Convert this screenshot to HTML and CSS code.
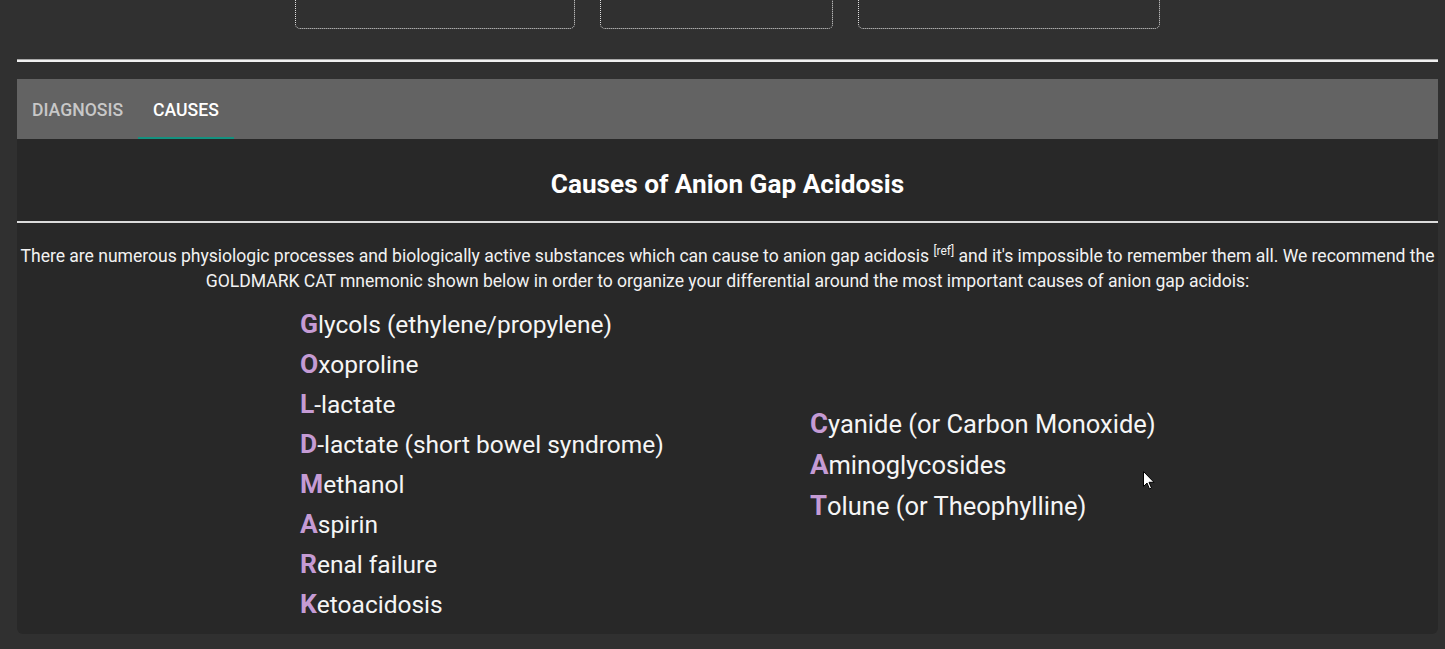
FILE: index.html
```html
<!DOCTYPE html>
<html>
<head>
<meta charset="utf-8">
<link rel="stylesheet" href="styles.css">
</head>
<body>
<div class="page">
  <div class="boxes">
    <div class="box b1"></div>
    <div class="box b2"></div>
    <div class="box b3"></div>
  </div>
  <hr class="sep">
  <div class="card">
    <div class="tabs">
      <div class="tab">Diagnosis</div>
      <div class="tab active">Causes</div>
    </div>
    <div class="panel">
      <h2 class="title">Causes of Anion Gap Acidosis</h2>
      <hr class="rule">
      <p class="intro">There are numerous physiologic processes and biologically active substances which can cause to anion gap acidosis <sup>[ref]</sup> and it's impossible to remember them all. We recommend the GOLDMARK CAT mnemonic shown below in order to organize your differential around the most important causes of anion gap acidois:</p>
      <div class="mnemonic">
        <ul class="col left">
          <li><b>G</b>lycols (ethylene/propylene)</li>
          <li><b>O</b>xoproline</li>
          <li><b>L</b>-lactate</li>
          <li><b>D</b>-lactate (short bowel syndrome)</li>
          <li><b>M</b>ethanol</li>
          <li><b>A</b>spirin</li>
          <li><b>R</b>enal failure</li>
          <li><b>K</b>etoacidosis</li>
        </ul>
        <ul class="col right">
          <li><b>C</b>yanide (or Carbon Monoxide)</li>
          <li><b>A</b>minoglycosides</li>
          <li><b>T</b>olune (or Theophylline)</li>
        </ul>
      </div>
    </div>
  </div>
  <svg class="cursor" width="12" height="19" viewBox="0 0 12 19"><path d="M0.5 0.5 L0.5 15.5 L4 12 L6.5 18 L8.5 17 L6 11.3 L11 11.3 Z" fill="#fff" stroke="#000" stroke-width="1"/></svg>
</div>
</body>
</html>
```
FILE: styles.css
```css
html, body {
  margin: 0;
  padding: 0;
  background: #303030;
  font-family: Roboto, "Liberation Sans", sans-serif;
  color: #f2f2f2;
}
.page {
  position: relative;
  margin: 0 7px 0 17px;
  padding-bottom: 16px;
}
.boxes {
  display: flex;
  gap: 25px;
  padding-left: 278px;
  height: 29px;
  overflow: hidden;
}
.box {
  height: 60px;
  margin-top: -31px;
  border: 1px dotted #e0e0e0;
  border-radius: 5px;
  box-sizing: border-box;
}
.b1 { width: 280px; }
.b2 { width: 233px; }
.b3 { width: 302px; }
.sep {
  margin: 30px 0 0;
  height: 0;
  border: 0;
  border-top: 1px solid #a8a8a8;
  border-bottom: 2px solid #f0f0f0;
}
.card {
  margin-top: 17px;
  background: #282828;
  border-radius: 0 0 6px 6px;
  overflow: hidden;
}
.tabs {
  display: flex;
  height: 60px;
  background: #636363;
}
.tab {
  display: flex;
  align-items: center;
  padding: 3px 15px 0;
  font-size: 17.6px;
  font-weight: 500;
  text-transform: uppercase;
  color: #c8c8c8;
  box-sizing: border-box;
  border-bottom: 2px solid transparent;
}
.tab.active {
  color: #ffffff;
  border-bottom-color: #14917f;
}
.panel {
  padding: 30px 0 9px;
}
.title {
  margin: 0;
  text-align: center;
  font-size: 26.2px;
  line-height: 30px;
  font-weight: 700;
  color: #ffffff;
}
.rule {
  margin: 22px 0 0;
  border: 0;
  height: 2px;
  background: #dcdcdc;
}
.intro {
  margin: 21px 0 0;
  padding: 0;
  text-align: center;
  font-size: 17.6px;
  line-height: 25px;
  letter-spacing: -0.04px;
  color: #f2f2f2;
}
.intro sup {
  font-size: 12px;
  line-height: 0;
  vertical-align: 7px;
}
.mnemonic {
  display: grid;
  grid-template-columns: 510px auto;
  align-items: center;
  padding-left: 283px;
  margin-top: 11px;
}
.col {
  list-style: none;
  margin: 0;
  padding: 0;
}
.col li {
  font-size: 24.5px;
  line-height: 40px;
  color: #f5f5f5;
}
.col.right li {
  font-size: 25.5px;
  line-height: 41px;
}
.col b {
  color: #c59bd4;
  font-size: 1.08em;
  line-height: 1;
  font-weight: 700;
}
.cursor {
  position: absolute;
  left: 1126px;
  top: 471px;
}
```
